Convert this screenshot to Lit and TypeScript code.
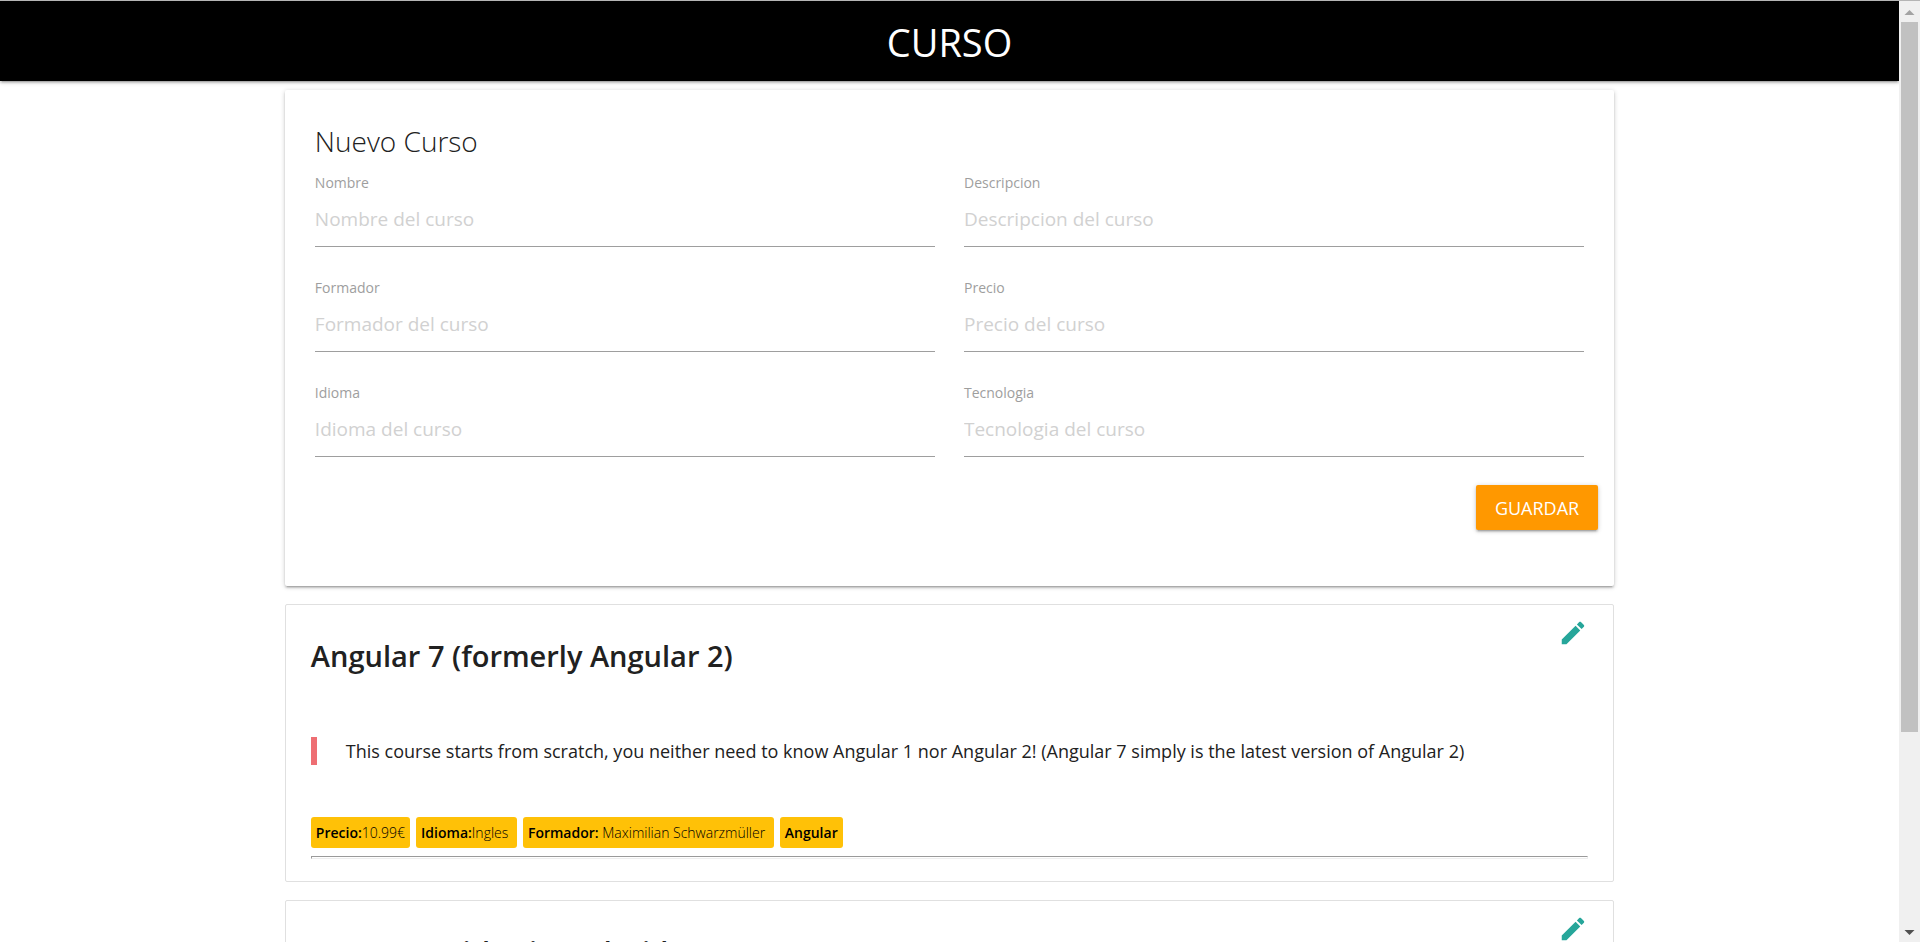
import { LitElement, html, css, nothing } from "lit";
import { customElement, property, state } from "lit/decorators.js";

interface Course {
  name: string;
  description?: string;
  price?: string;
  language?: string;
  trainer?: string;
  technology?: string;
}

interface Field {
  id: string;
  label: string;
  placeholder: string;
}

@customElement("course-form")
class CourseForm extends LitElement {
  static styles = css`
    :host {
      display: block;
    }
    .card {
      margin: 9px 0 18px;
      padding: 30px 16px 56px;
      border-radius: 2px;
      background: #fff;
      box-shadow: 0 2px 2px 0 rgba(0, 0, 0, 0.14), 0 3px 1px -2px rgba(0, 0, 0, 0.12),
        0 1px 5px 0 rgba(0, 0, 0, 0.2);
    }
    .title {
      margin: 0 14px 11px;
      font-size: 28px;
      font-weight: 300;
      line-height: 42px;
    }
    .fields {
      display: grid;
      grid-template-columns: 1fr 1fr;
      gap: 31px 29px;
      padding: 0 14px;
    }
    .field {
      display: flex;
      flex-direction: column;
    }
    .label {
      color: #9e9e9e;
      font-size: 14px;
      line-height: 20px;
    }
    .input {
      box-sizing: border-box;
      width: 100%;
      height: 54px;
      margin: 0;
      padding: 0 0 2px;
      border: 0;
      border-bottom: 1px solid #9e9e9e;
      border-radius: 0;
      outline: none;
      background: transparent;
      color: inherit;
      font: inherit;
      font-size: 19px;
    }
    .input::placeholder {
      color: #d1d1d1;
      opacity: 1;
    }
    .input:focus {
      border-bottom-color: #26a69a;
    }
    .actions {
      display: flex;
      justify-content: flex-end;
      margin-top: 28px;
    }
    .save {
      height: 45px;
      padding: 0 19px;
      border: 0;
      border-radius: 2px;
      background: #ff9800;
      color: #fff;
      font: inherit;
      font-size: 18px;
      text-transform: uppercase;
      cursor: pointer;
      box-shadow: 0 2px 2px 0 rgba(0, 0, 0, 0.14), 0 3px 1px -2px rgba(0, 0, 0, 0.12),
        0 1px 5px 0 rgba(0, 0, 0, 0.2);
    }
  `;

  private fields: Field[] = [
    { id: "nombre", label: "Nombre", placeholder: "Nombre del curso" },
    { id: "descripcion", label: "Descripcion", placeholder: "Descripcion del curso" },
    { id: "formador", label: "Formador", placeholder: "Formador del curso" },
    { id: "precio", label: "Precio", placeholder: "Precio del curso" },
    { id: "idioma", label: "Idioma", placeholder: "Idioma del curso" },
    { id: "tecnologia", label: "Tecnologia", placeholder: "Tecnologia del curso" },
  ];

  render() {
    return html`
      <form class="card" @submit=${(e: Event) => e.preventDefault()}>
        <h2 class="title">Nuevo Curso</h2>
        <div class="fields">
          ${this.fields.map(
            (f) => html`
              <div class="field">
                <label class="label" for=${f.id}>${f.label}</label>
                <input class="input" type="text" id=${f.id} name=${f.id} placeholder=${f.placeholder} />
              </div>
            `
          )}
        </div>
        <div class="actions">
          <button class="save" type="submit">Guardar</button>
        </div>
      </form>
    `;
  }
}

@customElement("course-card")
class CourseCard extends LitElement {
  static styles = css`
    :host {
      display: block;
    }
    .card {
      position: relative;
      margin-bottom: 18px;
      padding: 31px 25px 22px;
      border: 1px solid #e0e0e0;
      border-radius: 2px;
      background: #fff;
    }
    .edit {
      position: absolute;
      top: 13px;
      right: 25px;
      padding: 0;
      border: 0;
      background: none;
      color: #26a69a;
      cursor: pointer;
    }
    .icon {
      display: block;
      width: 30px;
      height: 30px;
      fill: currentColor;
    }
    .title {
      margin: 0;
      font-size: 29px;
      font-weight: 600;
      line-height: 40px;
    }
    .description {
      margin: 61px 0 52px;
      padding-left: 29px;
      border-left: 6px solid #ee6e73;
      font-size: 18px;
      line-height: 28px;
    }
    .chips {
      display: flex;
      flex-wrap: wrap;
      gap: 6px;
    }
    .chip {
      padding: 0 5px;
      border-radius: 3px;
      background: #ffc107;
      color: #000;
      font-size: 14px;
      font-weight: 300;
      line-height: 31px;
      white-space: pre;
    }
    .name {
      font-weight: 600;
    }
    .rule {
      height: 1px;
      margin: 8px 0 0;
      border: 1px solid #eee;
      border-top-color: #9a9a9a;
      border-left-color: #9a9a9a;
    }
  `;

  @property({ attribute: false }) course!: Course;

  private renderDetails(c: Course) {
    return html`
      <blockquote class="description">${c.description}</blockquote>
      <div class="chips">
        <span class="chip"><b class="name">Precio:</b>${c.price}</span>
        <span class="chip"><b class="name">Idioma:</b>${c.language} </span>
        <span class="chip"><b class="name">Formador:</b> ${c.trainer} </span>
        <span class="chip"><b class="name">${c.technology}</b></span>
      </div>
      <hr class="rule" />
    `;
  }

  render() {
    const c = this.course;
    return html`
      <article class="card">
        <button class="edit" type="button" aria-label="Editar">
          <svg class="icon" viewBox="0 0 24 24" aria-hidden="true">
            <path
              d="M3 17.25V21h3.75L17.81 9.94l-3.75-3.75L3 17.25zM20.71 7.04c.39-.39.39-1.02 0-1.41l-2.34-2.34c-.39-.39-1.02-.39-1.41 0l-1.83 1.83 3.75 3.75 1.83-1.83z"
            />
          </svg>
        </button>
        <h2 class="title">${c.name}</h2>
        ${c.description ? this.renderDetails(c) : nothing}
      </article>
    `;
  }
}

@customElement("app-root")
class AppRoot extends LitElement {
  static styles = css`
    :host {
      display: flex;
      height: 100vh;
      box-sizing: border-box;
      overflow: hidden;
      border-top: 1px solid #b5b5b5;
      background: #fff;
      color: #212121;
      font-family: "Open Sans", "Noto Sans", sans-serif;
    }
    .page {
      flex: 1;
      min-width: 0;
      overflow: hidden;
    }
    .header {
      padding-top: 2px;
      background: #000;
      box-shadow: 0 2px 2px 0 rgba(0, 0, 0, 0.14), 0 3px 1px -2px rgba(0, 0, 0, 0.12),
        0 1px 5px 0 rgba(0, 0, 0, 0.2);
    }
    .brand {
      margin: 0;
      color: #fff;
      font-size: 38px;
      font-weight: 400;
      line-height: 78px;
      text-align: center;
    }
    .container {
      width: 70%;
      margin: 0 auto;
    }
    .scrollbar {
      display: flex;
      flex-direction: column;
      width: 21px;
      background: #f0f0f0;
    }
    .arrow {
      display: block;
      width: 21px;
      height: 21px;
      fill: #505050;
    }
    .arrow.off {
      fill: #a3a3a3;
    }
    .track {
      display: flex;
      flex: 1;
      flex-direction: column;
      padding: 0 2px;
    }
    .thumb {
      flex: 79;
      background: #c1c1c1;
    }
    .rest {
      flex: 21;
    }
  `;

  @state() private courses: Course[] = [
    {
      name: "Angular 7 (formerly Angular 2)",
      description:
        "This course starts from scratch, you neither need to know Angular 1 nor Angular 2! (Angular 7 simply is the latest version of Angular 2)",
      price: "10.99€",
      language: "Ingles",
      trainer: "Maximilian Schwarzmüller",
      technology: "Angular",
    },
    { name: "Postgres with Git Android" },
  ];

  render() {
    return html`
      <div class="page">
        <header class="header"><h1 class="brand">CURSO</h1></header>
        <main class="container">
          <course-form></course-form>
          ${this.courses.map((c) => html`<course-card .course=${c}></course-card>`)}
        </main>
      </div>
      <div class="scrollbar" aria-hidden="true">
        <svg class="arrow off" viewBox="0 0 21 21"><path d="M10.5 9l5 5h-10z" /></svg>
        <div class="track">
          <div class="thumb"></div>
          <div class="rest"></div>
        </div>
        <svg class="arrow" viewBox="0 0 21 21"><path d="M5.5 9h10l-5 5z" /></svg>
      </div>
    `;
  }
}
